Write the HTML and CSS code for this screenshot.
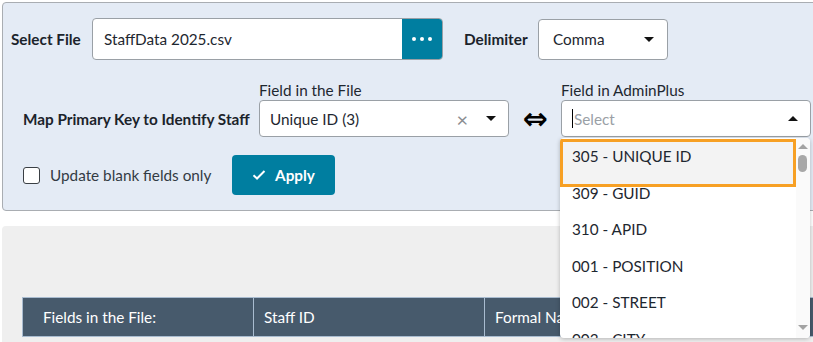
FILE: index.html
```html
<!DOCTYPE html>
<html>
<head>
<meta charset="utf-8">
<link rel="stylesheet" href="styles.css">
</head>
<body>
<div class="page">
  <section class="import-panel">
    <div class="row row-file">
      <label class="lbl bold">Select File</label>
      <div class="file-input">
        <span class="file-name">StaffData 2025.csv</span>
        <button class="browse"><span class="dot"></span><span class="dot"></span><span class="dot"></span></button>
      </div>
      <label class="lbl bold delim-lbl">Delimiter</label>
      <div class="select delim">
        <span>Comma</span>
        <span class="caret-down"></span>
      </div>
    </div>
    <div class="row row-map">
      <label class="lbl bold map-lbl">Map Primary Key to Identify Staff</label>
      <div class="field">
        <div class="field-lbl">Field in the File</div>
        <div class="select field-sel">
          <span>Unique ID (3)</span>
          <span class="clear">&#215;</span>
          <span class="caret-down"></span>
        </div>
      </div>
      <div class="arrow">&#8660;</div>
      <div class="field">
        <div class="field-lbl">Field in AdminPlus</div>
        <div class="select field-sel open">
          <span class="placeholder"><span class="cursor"></span>Select</span>
          <span class="caret-up"></span>
        </div>
      </div>
    </div>
    <div class="row row-apply">
      <label class="check"><span class="box"></span>Update blank fields only</label>
      <button class="apply">
        <svg width="14" height="12" viewBox="0 0 14 12"><path d="M1.5 6.2 L5 9.5 L12.5 2" fill="none" stroke="#fff" stroke-width="2"/></svg>
        Apply
      </button>
    </div>
  </section>

  <section class="mapping">
    <table class="map-table">
      <thead>
        <tr><th>Fields in the File:</th><th>Staff ID</th><th>Formal Name</th><th>Extra</th></tr>
      </thead>
    </table>
  </section>

  <div class="dropdown">
    <ul class="options">
      <li class="active">305 - UNIQUE ID</li>
      <li>309 - GUID</li>
      <li>310 - APID</li>
      <li>001 - POSITION</li>
      <li>002 - STREET</li>
      <li>003 - CITY</li>
    </ul>
    <div class="scrollbar">
      <span class="sb-up"></span>
      <span class="sb-thumb"></span>
      <span class="sb-down"></span>
    </div>
  </div>
</div>
</body>
</html>
```

FILE: styles.css
```css
* { box-sizing: border-box; }
html, body { margin: 0; padding: 0; background: #fff; overflow: hidden; }
body {
  font-family: "Lato", "Liberation Sans", sans-serif;
  font-size: 15.3px;
  color: #1e2730;
  width: 813px;
  height: 342px;
}
.page { position: relative; padding: 2px 0 0 2px; width: 813px; height: 342px; overflow: hidden; }

.import-panel {
  width: 830px;
  background: #e4ebf5;
  border: 1px solid #a9adb2;
  border-radius: 4px;
  padding: 15px 0 14px 8px;
  height: 209px;
}
.row { display: flex; align-items: center; }
.lbl { white-space: nowrap; }
.bold { font-weight: 700; color: #1b232b; }

.row-file { height: 42px; }
.row-file .lbl:first-child { width: 81px; }
.file-input {
  width: 351px; height: 42px;
  display: flex; align-items: center;
  background: #fff;
  border: 1px solid #9aa0a6;
  border-radius: 4px;
  overflow: hidden;
}
.file-name { flex: 1; padding-left: 11px; }
.browse {
  width: 40px; height: 42px; border: 0; margin: 0; padding: 0;
  background: #007ea0;
  display: flex; align-items: center; justify-content: center; gap: 4px;
}
.dot { width: 4px; height: 4px; background: #fff; border-radius: 50%; }
.delim-lbl { margin-left: 21px; width: 74px; }
.select {
  display: flex; align-items: center;
  background: #fff;
  border: 1px solid #9aa0a6;
  border-radius: 4px;
}
.delim { width: 130px; height: 41px; padding: 0 13px 0 14px; justify-content: space-between; }
.caret-down, .caret-up { width: 0; height: 0; border-left: 5px solid transparent; border-right: 5px solid transparent; }
.caret-down { border-top: 5px solid #111; }
.caret-up { border-bottom: 5px solid #111; }

.row-map { margin-top: 22px; align-items: flex-end; }
.map-lbl { margin-left: 12px; width: 236px; height: 36px; line-height: 36px; }
.field { display: flex; flex-direction: column; }
.field-lbl { height: 18px; line-height: 16px; margin-bottom: 0; color: #1e2730; }
.field-sel { width: 250px; height: 37px; padding: 0 12px 0 10px; }
.field-sel > span:first-child { flex: 1; }
.clear { color: #8a8d91; font-size: 20px; margin-right: 18px; line-height: 1; }
.arrow {
  width: 52px; height: 36px; text-align: center;
  font-size: 30px; font-weight: 700; line-height: 36px;
  font-family: "DejaVu Sans", sans-serif; color: #000;
}
.placeholder { color: #9aa0a6; display: flex; align-items: center; }
.cursor { display: inline-block; width: 1px; height: 19px; background: #000; margin-right: 1px; }

.row-apply { margin-top: 18px; height: 40px; padding-left: 12px; }
.check { display: flex; align-items: center; width: 209px; color: #333b44; }
.box { width: 17px; height: 17px; border: 1.5px solid #3a3f44; border-radius: 3px; background: #fff; margin-right: 10px; }
.apply {
  width: 103px; height: 40px;
  background: #007ea0;
  color: #fff; border: 0; border-radius: 4px;
  font-family: inherit; font-size: 15.3px; font-weight: 700;
  display: flex; align-items: center; justify-content: center; gap: 9px;
}

.mapping {
  margin-top: 15px;
  width: 830px; height: 140px;
  background: #efefef;
  border-radius: 4px;
  padding: 71px 0 0 20px;
}
.map-table { border-collapse: collapse; width: 924px; table-layout: fixed; }
.map-table th {
  background: #475a6c;
  color: #fff;
  font-weight: 400;
  text-align: left;
  height: 39px;
  padding: 0 10px;
  border: 1px solid #a9bcd0;
  width: 231px;
  white-space: nowrap;
  overflow: hidden;
}
.map-table th:first-child { padding-left: 20px; }

.dropdown {
  position: absolute;
  left: 560px; top: 138px;
  width: 250px; height: 200px;
  background: #fff;
  border-radius: 4px;
  box-shadow: 0 1px 4px rgba(0,0,0,0.25);
  overflow: hidden;
  display: flex;
}
.options { list-style: none; margin: 0; padding: 0; flex: 1; }
.options li { height: 36.6px; line-height: 36px; padding-left: 12px; color: #1e2730; white-space: nowrap; position: relative; }
.options li.active { background: transparent; }
.options li.active::before {
  content: "";
  position: absolute;
  left: 0; right: 0; top: 1px; height: 42px;
  background: #f3f3f3;
  border: 3px solid #f7a024;
  z-index: -1;
}
.options li.active { z-index: 0; }
.scrollbar { width: 14px; position: relative; background: #fafafa; }
.sb-up, .sb-down { position: absolute; left: 2px; width: 0; height: 0; border-left: 5px solid transparent; border-right: 5px solid transparent; }
.sb-up { top: 6px; border-bottom: 5px solid #a3a3a3; }
.sb-down { bottom: 8px; border-top: 5px solid #a3a3a3; }
.sb-thumb { position: absolute; left: 2px; top: 17px; width: 9px; height: 17px; background: #a8a8a8; border-radius: 5px; }
```
